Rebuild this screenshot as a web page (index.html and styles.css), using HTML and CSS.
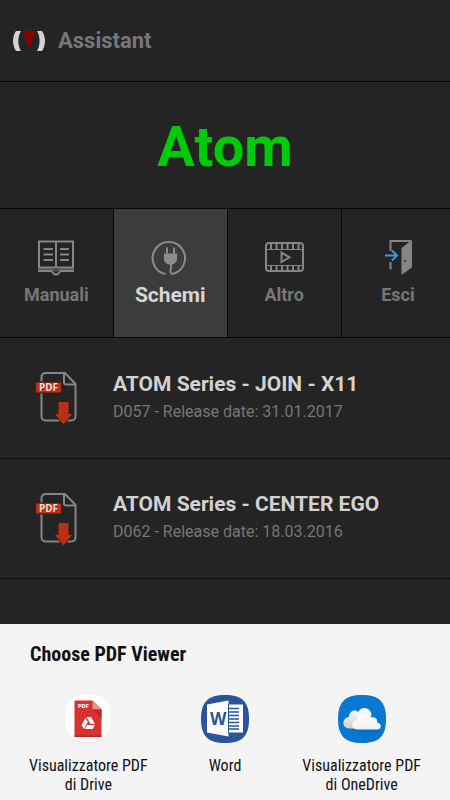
FILE: index.html
```html
<!DOCTYPE html>
<html lang="it">
<head>
<meta charset="utf-8">
<meta name="viewport" content="width=device-width, initial-scale=1">
<title>Assistant</title>
<link rel="stylesheet" href="styles.css">
</head>
<body>
<div class="app">
  <header class="bar">
    <svg class="logo" viewBox="0 0 34 20" aria-hidden="true">
      <path d="M4 0h5C5.500 6 5.500 14 9 20H4C0 14 0 6 4 0zM25 0h5c4 6 4 14 0 20h-5c3.500-6 3.500-14 0-20z" fill="#d2d2d2"/>
      <path d="M11 0h12l-5.500 19z" fill="#8b0000"/>
    </svg>
    <span class="app-name">Assistant</span>
  </header>
  <h1 class="product">Atom</h1>
  <nav class="tabs">
    <button class="tab">
      <svg class="tab-icon" viewBox="0 0 40 40" fill="none" stroke="#858585" stroke-width="2" aria-hidden="true">
        <path d="M3 4.500h34v26H3zM20 5v26M7.500 12H17M7.500 17.500H17M7.500 23H17M24 12h9M24 17.500h9M24 23h9M2 34h13.500c1 0 1 3.500 4.500 3.500s3.500-3.500 4.500-3.500H38"/>
        <path d="M2 32h14l4 2 4-2h14" stroke-width="1"/>
      </svg>
      <span class="tab-label">Manuali</span>
    </button>
    <button class="tab tab-active">
      <svg class="tab-icon" viewBox="0 0 40 40" fill="none" stroke="#8c8c8c" stroke-width="2" aria-hidden="true">
        <path d="M15.500 37A16.200 16.200 0 1 1 24 36.500c-4 1-4-2-3-5 .5-3-.5-3.500-.5-7"/>
        <path d="M17 10.500v6M24 10.500v6"/>
        <path d="M14 16.500h13v6c0 2-3 5-5 5h-3c-2 0-5-3-5-5z" fill="#8c8c8c" stroke="none"/>
      </svg>
      <span class="tab-label">Schemi</span>
    </button>
    <button class="tab">
      <svg class="tab-icon" viewBox="0 0 40 40" fill="none" stroke="#858585" stroke-width="2" aria-hidden="true">
        <rect x="2" y="6" width="37" height="28" rx="3"/>
        <path d="M2 12.500h37M2 28.500h37" stroke-width="1"/>
        <path d="M7 6v6M12.500 6v6M18 6v6M23.500 6v6M29 6v6M34.500 6v6M7 29v5M12.500 29v5M18 29v5M23.500 29v5M29 29v5M34.500 29v5M17.500 15.500v9.500l8-4.700z"/>
      </svg>
      <span class="tab-label">Altro</span>
    </button>
    <button class="tab">
      <svg class="tab-icon" viewBox="0 0 40 40" aria-hidden="true">
        <path d="M12.500 14V4H33M12.500 25v7.500" fill="none" stroke="#858585" stroke-width="2"/>
        <path d="M34 3v27.500L23.500 38V11z" fill="#858585"/>
        <circle cx="27" cy="24" r="1" fill="#242424"/>
        <path d="M7 18.500h11M14 13.500l5 5-5 5" fill="none" stroke="#3f97d8" stroke-width="2"/>
      </svg>
      <span class="tab-label">Esci</span>
    </button>
  </nav>
  <main class="docs">
    <a class="doc" href="#d057">
      <svg class="doc-icon" viewBox="0 0 42 54" aria-hidden="true">
        <path d="M29 2H9.500a4 4 0 0 0-4 4v39.500a4 4 0 0 0 4 4h26a4 4 0 0 0 4-4V13L29 2H28v9.500a2 2 0 0 0 2 2h9.500" fill="none" stroke="#858585" stroke-width="2"/>
        <path d="M0 10.500h26v12H0z" fill="#242424"/>
        <path d="M0 11.500h25v10H0z" fill="#bb2f12"/>
        <text x="3" y="20" class="pdf-tag">PDF</text>
        <path d="M22 30.500h11v12h4L27.500 54 18 42.500h4z" fill="#bb2f12" stroke="#242424" stroke-width="1"/>
      </svg>
      <span class="doc-text"><strong class="doc-title">ATOM Series - JOIN - X11</strong><span class="doc-meta">D057 - Release date: 31.01.2017</span></span>
    </a>
    <a class="doc" href="#d062">
      <svg class="doc-icon" viewBox="0 0 42 54" aria-hidden="true">
        <path d="M29 2H9.500a4 4 0 0 0-4 4v39.500a4 4 0 0 0 4 4h26a4 4 0 0 0 4-4V13L29 2H28v9.500a2 2 0 0 0 2 2h9.500" fill="none" stroke="#858585" stroke-width="2"/>
        <path d="M0 10.500h26v12H0z" fill="#242424"/>
        <path d="M0 11.500h25v10H0z" fill="#bb2f12"/>
        <text x="3" y="20" class="pdf-tag">PDF</text>
        <path d="M22 30.500h11v12h4L27.500 54 18 42.500h4z" fill="#bb2f12" stroke="#242424" stroke-width="1"/>
      </svg>
      <span class="doc-text"><strong class="doc-title">ATOM Series - CENTER EGO</strong><span class="doc-meta">D062 - Release date: 18.03.2016</span></span>
    </a>
  </main>
  <section class="sheet" aria-labelledby="sheet-title">
    <h2 class="sheet-title" id="sheet-title">Choose PDF Viewer</h2>
    <div class="viewers">
      <button class="viewer">
        <svg class="viewer-icon" viewBox="0 0 48 48" aria-hidden="true">
          <path d="M24 1C41 1 47.500 7 47.500 24.500S41 48 24 48 .5 42 .5 24.500 7 1 24 1z" fill="#d5d5d5"/>
          <path d="M24 0C41 0 47.500 6.500 47.500 24S41 47.500 24 47.500.5 41 .5 24 7 0 24 0z" fill="#fdfdfd"/>
          <path d="M12 5.500h16.500l9 9V41q0 1-1 1h-25q-1 0-1-1V6.500q0-1 1.500-1z" fill="#d7322d"/>
          <path d="M10.500 40.500h27V42h-27z" fill="#b92724"/>
          <path d="M28.500 5.500l9 9h-9z" fill="#ed8f8d"/>
          <path d="M28.500 14.500h9v9z" fill="#b92b28"/>
          <text x="14" y="13" class="drive-tag">PDF</text>
          <path d="M22.500 22h4.500l4 7h-4.500zM21.500 23l2.300 4-4 7-2.300-4zM23 30h8l-2.300 4h-8z" fill="#fff"/>
        </svg>
        <span>Visualizzatore PDF<br>di Drive</span>
      </button>
      <button class="viewer">
        <svg class="viewer-icon" viewBox="0 0 48 48" aria-hidden="true">
          <path d="M24 0C41 0 48 6.500 48 24S41 48 24 48 0 41 0 24 7 0 24 0z" fill="#2a5699"/>
          <path d="M27 9.500h15v28H27z" fill="#fff"/>
          <path d="M27 13.500h11M27 17h11M27 20.500h11M27 24h11M27 27.500h11M27 31h11M27 34h11" stroke="#2a5699" stroke-width="1.500"/>
          <path d="M6 9.500L27.500 5.500v36L6 37.500z" fill="#fff"/>
          <path d="M27.500 9v29" stroke="#2a5699"/>
          <text x="9" y="30" class="word-mark">W</text>
        </svg>
        <span>Word</span>
      </button>
      <button class="viewer">
        <svg class="viewer-icon" viewBox="0 0 48 48" aria-hidden="true">
          <defs>
            <linearGradient id="cloud-back" x2="0" y2="1"><stop stop-color="#fff"/><stop offset="1" stop-color="#cfcfcf"/></linearGradient>
            <linearGradient id="cloud-front" x2="0" y2="1"><stop stop-color="#fff"/><stop offset="1" stop-color="#f0f0f0"/></linearGradient>
            <linearGradient id="cloud-shade" x2="0" y2="1"><stop stop-color="#076bbd"/><stop offset="1" stop-color="#0878d3"/></linearGradient>
          </defs>
          <path d="M24 0C41 0 48 6.500 48 24S41 48 24 48 0 41 0 24 7 0 24 0z" fill="#0878d3"/>
          <path d="M14 34l12 11c9 0 14-2 17-8l-3-6z" fill="url(#cloud-shade)"/>
          <path d="M11.500 33.500c-8 0-8-10.500-.5-11.500 0-6 6-8 9-5 4-7 13-4 13.500 3l-4 13.500z" fill="url(#cloud-back)"/>
          <path d="M18.500 34.500c-6-1-6-9 .5-9.500 0-7 10-9 13-2.500 5-1 8 1.500 7 5 5 .5 5 7 0 7z" fill="url(#cloud-front)"/>
        </svg>
        <span>Visualizzatore PDF<br>di OneDrive</span>
      </button>
    </div>
  </section>
</div>
</body>
</html>
```
FILE: styles.css
```css
* { box-sizing: border-box; }

body {
  margin: 0;
  background: #242424;
  font-family: Roboto, sans-serif;
}

button {
  margin: 0;
  padding: 0;
  border: 0;
  background: none;
  color: inherit;
  font: inherit;
}

.app {
  display: flex;
  flex-direction: column;
  min-height: 100vh;
}

.bar {
  display: flex;
  align-items: center;
  gap: 12px;
  padding: 28px 12px 27px;
  border-bottom: 1px solid #050505;
}

.logo {
  width: 34px;
  height: 20px;
}

.app-name {
  color: #777;
  font-size: 22px;
  font-weight: 700;
  line-height: 26px;
}

.product {
  margin: 0;
  padding: 34px 0 30px;
  border-bottom: 1px solid #050505;
  color: #00cb08;
  font-size: 56px;
  line-height: 62px;
  text-align: center;
}

.tabs {
  display: grid;
  grid-template-columns: repeat(4, 25.3%);
  overflow: hidden;
  border-bottom: 1px solid #050505;
}

.tab {
  display: flex;
  flex-direction: column;
  align-items: center;
  gap: 4px;
  padding: 28px 0;
  border-right: 1px solid #080808;
  color: #777;
  font-size: 18px;
  font-weight: 700;
  line-height: 28px;
}

.tab-active {
  background: #3c3c3c;
  color: #d6d6d6;
  font-size: 21px;
}

.tab-icon {
  width: 40px;
  height: 40px;
}

.docs { flex: 1; }

.doc {
  display: flex;
  align-items: center;
  gap: 35px;
  height: 120px;
  padding: 0 36px;
  border-bottom: 1px solid #0c0c0c;
  text-decoration: none;
}

.doc:first-child { height: 121px; }

.doc-icon {
  flex: none;
  width: 42px;
  height: 54px;
}

.doc-text {
  display: flex;
  flex-direction: column;
  gap: 4px;
  padding-bottom: 5px;
}

.doc-title {
  color: #d2d2d2;
  font-size: 21px;
  line-height: 28px;
}

.doc-meta {
  color: #777;
  font-size: 16px;
  line-height: 20px;
}

.pdf-tag {
  fill: #e8dcd8;
  font: 700 10px "Noto Sans", sans-serif;
}

.sheet {
  padding: 16px 20px 6px;
  background: #f4f4f4;
  color: #111;
  font-family: "Roboto Condensed", Roboto, sans-serif;
}

.sheet-title {
  margin: 0 10px 27px;
  font-size: 20px;
  line-height: 28px;
}

.viewers {
  display: grid;
  grid-template-columns: repeat(3, 1fr);
}

.viewer {
  display: flex;
  flex-direction: column;
  align-items: center;
  gap: 13px;
  font-size: 16px;
  line-height: 19px;
}

.viewer-icon {
  width: 48px;
  height: 48px;
}

.drive-tag {
  fill: #fff;
  font: 700 6px Roboto, sans-serif;
}

.word-mark {
  fill: #2a5699;
  font: 700 17px "Open Sans", sans-serif;
}
```
